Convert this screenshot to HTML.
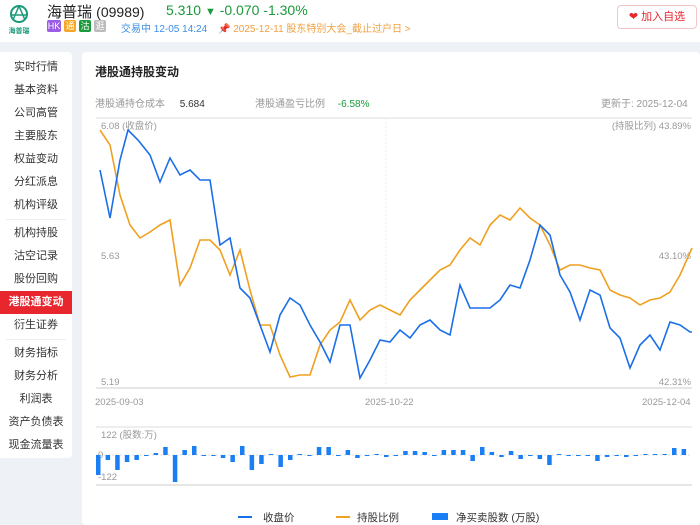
<!DOCTYPE html><html><head><meta charset="utf-8"><style>
*{margin:0;padding:0;box-sizing:border-box}
body{width:700px;height:525px;overflow:hidden;background:#eef2f7;font-family:"Liberation Sans","Noto Sans CJK SC",sans-serif;position:relative}
.hd{position:absolute;left:0;top:0;width:700px;height:42px;background:#fff}
.abs{position:absolute;white-space:nowrap}
.side{position:absolute;left:0;top:52px;width:72px;height:406px;background:#fff;border-radius:0 4px 4px 0}
.side div{height:23px;line-height:23px;font-size:11px;text-align:center;color:#333}
.side .on{background:#e8262e;color:#fff;font-weight:bold}
.side hr{border:0;border-top:1px solid #eee;margin:2px 6px}
.main{position:absolute;left:82px;top:52px;width:618px;height:473px;background:#fff;border-radius:4px}
.tag{display:inline-block;width:12px;height:12px;font-size:9px;line-height:12px;text-align:center;color:#fff;border-radius:2px;margin-right:3px}
</style></head><body>
<div class="hd"></div>
<svg class="abs" style="left:6px;top:3px" width="26" height="34" viewBox="0 0 26 34"><circle cx="13" cy="11" r="8" fill="none" stroke="#1a9a7a" stroke-width="2"/><path d="M13 3 L7 17 M13 3 L19 17 M6 12 H20" stroke="#1a9a7a" stroke-width="1.5" fill="none"/><text x="13" y="30" font-size="7" fill="#1a9a7a" text-anchor="middle" font-weight="bold">海普瑞</text></svg>
<div class="abs" style="left:47px;top:1px;font-size:15px;color:#222">海普瑞 <span style="font-size:14px">(09989)</span></div>
<div class="abs" style="left:166px;top:2px;font-size:14px;color:#1a9a3a">5.310 <span style="font-size:11px">▼</span> -0.070 -1.30%</div>
<div class="abs" style="left:47px;top:20px;font-size:10px"><span class="tag" style="background:#9b5de5;width:14px">HK</span><span class="tag" style="background:#f5a623">通</span><span class="tag" style="background:#1a9a3a">沽</span><span class="tag" style="background:#bbb">逛</span></div>
<div class="abs" style="left:121px;top:20px;font-size:10px;color:#3a8ee6">交易中 12-05 14:24</div>
<div class="abs" style="left:218px;top:20px;font-size:10px;color:#f0a040">📌 2025-12-11 股东特别大会_截止过户日 &gt;</div>
<div class="abs" style="left:617px;top:5px;width:80px;height:24px;border:1px solid #f3c6c6;border-radius:4px;font-size:11px;color:#e8262e;line-height:22px;text-align:center">❤ 加入自选</div>
<div class="side">
<div style="margin-top:4px">实时行情</div><div>基本资料</div><div>公司高管</div><div>主要股东</div><div>权益变动</div><div>分红派息</div><div>机构评级</div><hr>
<div>机构持股</div><div>沽空记录</div><div>股份回购</div><div class="on">港股通变动</div><div>衍生证券</div><hr>
<div>财务指标</div><div>财务分析</div><div>利润表</div><div>资产负债表</div><div>现金流量表</div></div>
<div class="main"></div>
<div class="abs" style="left:95px;top:63px;font-size:12px;font-weight:bold;color:#222">港股通持股变动</div>
<div class="abs" style="left:95px;top:95px;font-size:10px;color:#999">港股通持仓成本 <span style="color:#333;margin-left:12px">5.684</span></div>
<div class="abs" style="left:255px;top:95px;font-size:10px;color:#999">港股通盈亏比例 <span style="color:#1a9a3a;margin-left:10px">-6.58%</span></div>
<div class="abs" style="left:601px;top:95px;font-size:10px;color:#999">更新于: 2025-12-04</div>
<svg class="abs" style="left:0;top:0" width="700" height="525" font-size="9.5" fill="#999">
<line x1="96" y1="118" x2="692" y2="118" stroke="#ddd"/>
<line x1="96" y1="388" x2="692" y2="388" stroke="#ccc"/>
<line x1="386" y1="118" x2="386" y2="388" stroke="#eee" stroke-dasharray="2,2"/>
<text x="101" y="129">6.08 (收盘价)</text><text x="101" y="259">5.63</text><text x="101" y="385">5.19</text>
<text x="691" y="129" text-anchor="end">(持股比列) 43.89%</text><text x="691" y="259" text-anchor="end">43.10%</text><text x="691" y="385" text-anchor="end">42.31%</text>
<text x="95" y="405">2025-09-03</text><text x="365" y="405">2025-10-22</text><text x="642" y="405">2025-12-04</text>
<line x1="96" y1="427" x2="692" y2="427" stroke="#ddd"/><line x1="96" y1="485" x2="692" y2="485" stroke="#ccc"/>
<line x1="96" y1="455" x2="692" y2="455" stroke="#ddd" stroke-dasharray="2,2"/>
<text x="101" y="438">122 (股数:万)</text><text x="98" y="458">0</text><text x="98" y="480">-122</text>
<polyline fill="none" stroke="#f0a020" stroke-width="1.6" points="100,130 110,145 120,195 130,225 140,238 150,232 160,225 170,220 180,285 190,268 200,240 210,240 220,250 230,275 240,250 250,290 260,325 270,325 280,355 290,377 300,375 310,375 320,345 330,330 340,322 350,300 360,320 370,310 380,305 390,310 400,315 410,300 420,290 430,280 440,270 450,265 460,250 470,238 480,245 490,225 500,215 510,220 520,208 530,218 540,225 550,245 560,270 570,265 580,265 590,268 600,270 610,290 620,295 630,298 640,305 650,300 660,298 670,292 680,275 692,248"/>
<polyline fill="none" stroke="#1a6fe8" stroke-width="1.6" points="100,170 110,218 120,160 128,130 138,140 150,155 160,182 170,158 180,175 190,170 200,180 210,180 220,245 230,238 240,288 250,298 260,325 270,352 280,315 290,298 300,305 310,325 320,342 330,362 340,325 350,325 360,378 370,360 380,340 390,342 400,330 410,338 420,325 430,320 440,330 450,335 460,285 470,308 480,308 490,308 500,300 510,285 520,288 530,260 540,225 550,235 560,275 570,292 580,320 590,290 600,295 610,328 620,338 630,368 640,345 650,335 660,350 670,322 680,325 690,332 692,332"/>
<g fill="#1a7ef5" id="bars"></g>
<line x1="238" y1="517" x2="252" y2="517" stroke="#1a6fe8" stroke-width="2"/><text x="263" y="521" fill="#333" font-size="10.5">收盘价</text>
<line x1="336" y1="517" x2="350" y2="517" stroke="#f0a020" stroke-width="2"/><text x="357" y="521" fill="#333" font-size="10.5">持股比例</text>
<rect x="432" y="513" width="16" height="7" fill="#1a7ef5"/><text x="456" y="521" fill="#333" font-size="10.5">净买卖股数 (万股)</text>
</svg>
<script>
var h=[-20,-5,-15,-7,-5,0,2,8,-27,5,9,0,0,-3,-7,9,-15,-9,1,-12,-5,1,0,8,8,-1,5,-3,-1,1,-2,0,4,4,3,-1,5,5,5,-6,8,3,-2,4,-4,0,-4,-10,1,0,0,0,-6,-2,0,-2,-1,1,1,1,7,6];
var g=document.getElementById('bars'),s='';
for(var i=0;i<h.length;i++){var x=96+i*9.6,v=h[i],hh=Math.max(Math.abs(v),1);s+='<rect x="'+x.toFixed(1)+'" y="'+(v>0?455-v:455)+'" width="4.5" height="'+hh+'"/>';}
g.innerHTML=s;
</script>
</body></html>
